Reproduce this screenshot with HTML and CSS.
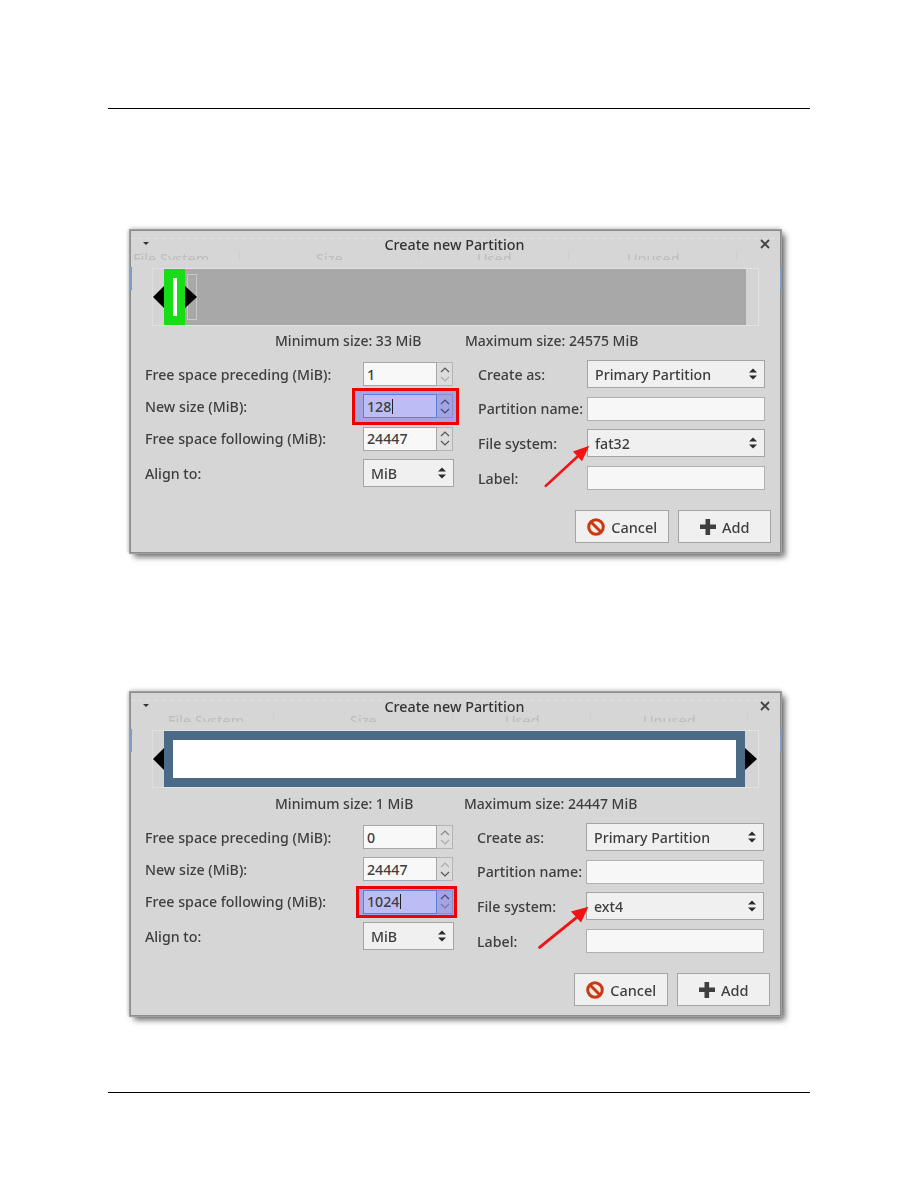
FILE: index.html
```html
<!DOCTYPE html>
<html lang="en">
<head>
<meta charset="utf-8">
<title>Create new Partition</title>
<link rel="stylesheet" href="styles.css">
</head>
<body>
<svg class="defs" width="0" height="0" aria-hidden="true">
  <symbol id="updown" viewBox="0 0 10 14"><path d="M5 0 10 5H0ZM5 14 0 9H10Z"/></symbol>
  <symbol id="chev-up" viewBox="0 0 10 6"><path d="M1 5 5 1 9 5" fill="none" stroke="currentColor" stroke-width="1.2"/></symbol>
  <symbol id="chev-down" viewBox="0 0 10 6"><path d="M1 1 5 5 9 1" fill="none" stroke="currentColor" stroke-width="1.2"/></symbol>
  <symbol id="cancel" viewBox="0 0 20 20"><circle cx="10" cy="10" r="7.3" fill="#f4ece8" stroke="#c93a12" stroke-width="3"/><path d="M5 5 15 15" stroke="#c93a12" stroke-width="3"/></symbol>
  <symbol id="plus" viewBox="0 0 18 18"><path d="M6.500 1h4.600v5.500h5.900v4.600h-5.900V17H6.500v-5.900H1V6.500h5.500Z" fill="#3f3f3f"/></symbol>
  <symbol id="close" viewBox="0 0 10 10"><path d="M1 1 9 9M9 1 1 9" stroke="#444" stroke-width="1.800"/></symbol>
</svg>
<main class="page">

  <section class="dialog dialog-a">
    <span class="sliver sliver-l"></span><span class="sliver sliver-r"></span>
    <header class="titlebar">
      <span class="menu-arrow"></span>
      <h2 class="title">Create new Partition</h2>
      <svg class="close"><use href="#close"/></svg>
    </header>
    <div class="ghost"><div class="ghost-text"><span>File System</span><span>Size</span><span>Used</span><span>Unused</span></div></div>
    <div class="graph">
      <div class="lead"><i class="tri tri-l"></i></div>
      <div class="part part-green"><b class="bar"></b></div>
      <div class="rest"><span class="outline"></span><i class="tri tri-r"></i></div>
      <div class="tail"></div>
    </div>
    <div class="sizes"><span class="min">Minimum size: 33 MiB</span><span class="max">Maximum size: 24575 MiB</span></div>
    <div class="form">
      <div class="col-left">
        <div class="row"><label>Free space preceding (MiB):</label><div class="spin"><div class="field">1</div><div class="steps"><svg class="on"><use href="#chev-up"/></svg><svg class="off"><use href="#chev-down"/></svg></div></div></div>
        <div class="row"><label>New size (MiB):</label><div class="spin hl hl-a"><div class="field">128<i class="caret"></i></div><div class="steps"><svg class="on"><use href="#chev-up"/></svg><svg class="on"><use href="#chev-down"/></svg></div></div></div>
        <div class="row"><label>Free space following (MiB):</label><div class="spin"><div class="field">24447</div><div class="steps"><svg class="on"><use href="#chev-up"/></svg><svg class="on"><use href="#chev-down"/></svg></div></div></div>
        <div class="row tall"><label>Align to:</label><div class="select short">MiB<svg class="updown"><use href="#updown"/></svg></div></div>
      </div>
      <div class="col-right">
        <div class="row tall"><label>Create as:</label><div class="select">Primary Partition<svg class="updown"><use href="#updown"/></svg></div></div>
        <div class="row"><label>Partition name:</label><div class="text"></div></div>
        <div class="row tall"><label>File system:</label><div class="select">fat32<svg class="updown"><use href="#updown"/></svg></div></div>
        <div class="row"><label>Label:</label><div class="text"></div></div>
      </div>
    </div>
    <div class="buttons">
      <div class="btn"><svg class="ico"><use href="#cancel"/></svg>Cancel</div>
      <div class="btn"><svg class="ico ico-plus"><use href="#plus"/></svg>Add</div>
    </div>
    <svg class="pointer pointer-a" viewBox="0 0 60 56"><path d="M3 51 44 13" stroke="#f01414" stroke-width="3.200" stroke-linecap="round"/><path d="M56 2 47 21 36 9Z" fill="#f01414"/></svg>
  </section>

  <section class="dialog dialog-b">
    <span class="sliver sliver-l"></span><span class="sliver sliver-r"></span>
    <header class="titlebar">
      <span class="menu-arrow"></span>
      <h2 class="title">Create new Partition</h2>
      <svg class="close"><use href="#close"/></svg>
    </header>
    <div class="ghost"><div class="ghost-text"><span>File System</span><span>Size</span><span>Used</span><span>Unused</span></div></div>
    <div class="graph">
      <div class="lead"><i class="tri tri-l"></i></div>
      <div class="part part-blue"><div class="part-inner"></div></div>
      <div class="tail"><i class="tri tri-r"></i></div>
    </div>
    <div class="sizes"><span class="min">Minimum size: 1 MiB</span><span class="max">Maximum size: 24447 MiB</span></div>
    <div class="form">
      <div class="col-left">
        <div class="row"><label>Free space preceding (MiB):</label><div class="spin"><div class="field">0</div><div class="steps"><svg class="mid"><use href="#chev-up"/></svg><svg class="off"><use href="#chev-down"/></svg></div></div></div>
        <div class="row"><label>New size (MiB):</label><div class="spin"><div class="field">24447</div><div class="steps"><svg class="off"><use href="#chev-up"/></svg><svg class="on"><use href="#chev-down"/></svg></div></div></div>
        <div class="row"><label>Free space following (MiB):</label><div class="spin hl hl-b"><div class="field">1024<i class="caret"></i></div><div class="steps"><svg class="on"><use href="#chev-up"/></svg><svg class="mid"><use href="#chev-down"/></svg></div></div></div>
        <div class="row tall"><label>Align to:</label><div class="select short">MiB<svg class="updown"><use href="#updown"/></svg></div></div>
      </div>
      <div class="col-right">
        <div class="row tall"><label>Create as:</label><div class="select">Primary Partition<svg class="updown"><use href="#updown"/></svg></div></div>
        <div class="row"><label>Partition name:</label><div class="text"></div></div>
        <div class="row tall"><label>File system:</label><div class="select">ext4<svg class="updown"><use href="#updown"/></svg></div></div>
        <div class="row"><label>Label:</label><div class="text"></div></div>
      </div>
    </div>
    <div class="buttons">
      <div class="btn"><svg class="ico"><use href="#cancel"/></svg>Cancel</div>
      <div class="btn"><svg class="ico ico-plus"><use href="#plus"/></svg>Add</div>
    </div>
    <svg class="pointer pointer-b" viewBox="0 0 60 50"><path d="M3 46 45 12" stroke="#f01414" stroke-width="3.200" stroke-linecap="round"/><path d="M56 2 48 19 37 7Z" fill="#f01414"/></svg>
  </section>

</main>
</body>
</html>
```

FILE: styles.css
```css
* { box-sizing: border-box; }
html, body { margin: 0; background: #fff; }
.defs { position: absolute; }
body { font-family: "Noto Sans", "Open Sans", sans-serif; font-size: 14.2px; color: #3e3e3e; }

.page {
  width: 702px;
  height: 985px;
  margin: 108px 0 0 108px;
  padding: 121px 0 0 22px;
  border-top: 1px solid #000;
  border-bottom: 1px solid #000;
}

.dialog {
  position: relative;
  width: 651px;
  height: 323px;
  border: 1px solid #8c8c8c;
  background: #d6d6d6;
  box-shadow: 0 0 0 1px #a0a0a0, 4px 4px 6px #6b6b6b, 0 -2px 4px #ccc, -2px 0 3px #ccc;
  filter: blur(0.5px);
}
.dialog-b { height: 324px; margin-top: 139px; }

.sliver { position: absolute; top: 36px; width: 2px; height: 23px; background: #7d9cc4; }
.sliver-l { left: -1px; }
.sliver-r { right: -2px; }

.titlebar {
  display: grid;
  grid-template-columns: 1fr auto 1fr;
  align-items: center;
  height: 26px;
  padding: 0 10px 0 12px;
  background: repeating-linear-gradient(90deg, #e3e2d2 0 4px, transparent 4px 8px) 0 7px / 100% 1px no-repeat;
}
.menu-arrow { width: 0; height: 0; margin-top: -2px; border: 3.500px solid transparent; border-top-color: #333; border-bottom: 0; }
.title { margin: 0; padding-right: 4px; font-size: 14.3px; font-weight: 500; color: #333; white-space: nowrap; }
.close { justify-self: end; width: 10px; height: 10px; }

.ghost { position: relative; height: 9px; overflow: hidden; margin-top: -6px; }
.ghost-text { display: grid; font-size: 14.500px; line-height: 14px; color: #bcbcbc; }
.ghost-text span { position: relative; }
.ghost-text span::after { content: ""; position: absolute; top: 0; left: 102px; height: 14px; border-left: 1px solid #cfcfcf; }
.dialog-a .ghost-text { grid-template-columns: 183px 161px 150px 1fr; padding-left: 2px; }
.dialog-a .ghost-text span:nth-child(1)::after { left: 106px; }
.dialog-a .ghost-text span:nth-child(3)::after { left: 91px; }
.dialog-a .ghost-text span:nth-child(4)::after { left: 109px; }
.dialog-b .ghost-text { grid-template-columns: 182px 155px 138px 1fr; padding-left: 37px; }
.dialog-b .ghost-text span:nth-child(1)::after { left: 105px; }
.dialog-b .ghost-text span:nth-child(3)::after { left: 85px; }
.dialog-b .ghost-text span:nth-child(4)::after { left: 104px; }

.graph {
  display: flex;
  width: 607px;
  height: 58px;
  margin: 8px 0 0 21px;
  border: 1px solid #e2e2e2;
  border-left-color: #dedede;
  background: #d4d4d4;
}
.lead { position: relative; width: 11px; flex: none; }
.part { flex: none; display: flex; align-items: center; justify-content: center; }
.part-green { width: 21px; background: #17dc17; }
.bar { width: 4px; height: 38px; background: #fff; }
.rest { position: relative; width: 561px; flex: none; background: #a8a8a8; }
.tail { position: relative; flex: 1; }
.part-blue { width: 581px; background: #4a6a88; }
.part-inner { width: 563px; height: 38px; background: #fff; }
.tri { position: absolute; top: 17px; width: 0; height: 0; border: 11.500px solid transparent; }
.tri-l { right: 0; border-left: 0; border-right: 11px solid #000; }
.tri-r { left: 0; border-right: 0; border-left: 12px solid #000; }
.outline { position: absolute; left: 2px; top: 5px; width: 10px; height: 46px; border: 1px solid #c8c8c8; }

.sizes { position: relative; height: 18px; margin-top: 6px; font-size: 14px; line-height: 18px; font-weight: 500; white-space: nowrap; }
.dialog-b .sizes { margin-top: 7px; }
.min { position: absolute; left: 144px; }
.max { position: absolute; left: 334px; }
.dialog-b .max { left: 333px; }

.form { display: flex; margin: 10px 0 0 14px; height: 129px; }
.col-left { width: 333px; padding-top: 2px; display: flex; flex-direction: column; gap: 8.400px; }
.col-right { width: 287px; display: flex; flex-direction: column; gap: 8.700px; }
.dialog-b .col-right { margin-left: -1px; }

.row { display: flex; align-items: center; height: 24px; white-space: nowrap; }
.row.tall { height: 28px; }
.row label { font-weight: 500; }
.col-left .row label { width: 218px; flex: none; }
.col-right .row label { width: 109px; flex: none; }

.spin { position: relative; display: flex; width: 90px; height: 24px; }
.field {
  position: relative;
  display: flex;
  align-items: center;
  width: 75px;
  padding-left: 3px;
  background: #f8f8f8;
  border: 1px solid #a6a6a6;
  font-weight: 500;
}
.steps {
  position: relative;
  display: flex;
  flex-direction: column;
  align-items: center;
  justify-content: space-around;
  width: 16px;
  padding: 2px 0;
  background: #dcdcdc;
  border: 1px solid #b4b4b4;
  border-left: 0;
}
.steps svg { width: 10px; height: 6px; }
.steps .on { color: #555; }
.steps .mid { color: #888; }
.steps .off { color: #adadad; }

.hl::before { content: ""; position: absolute; border: 3.500px solid #f00000; background: #a4a4e2; }
.hl-a::before { inset: -6px -6px -7px -11px; }
.hl-b::before { inset: -4px -4px -4px -7px; border-width: 3px; }
.hl .field { background: #bdbdf5; border-color: #5b7fdc; }
.hl .steps { background: #a4a4e2; border-color: #8d8dc6; }
.hl .steps .on { color: #3f4a80; }
.hl .steps .mid { color: #7378b6; }
.caret { width: 1px; height: 15px; margin-left: 1px; background: #222; }

.select {
  display: flex;
  align-items: center;
  justify-content: space-between;
  width: 178px;
  height: 28px;
  padding: 0 7px;
  background: #f0f0f0;
  border: 1px solid #a4a4a4;
  font-weight: 500;
}
.select.short { width: 91px; }
.updown { width: 8px; height: 12px; fill: #2b2b2b; }
.text { width: 178px; height: 24px; background: #f7f7f7; border: 1px solid #b0b0b0; }

.buttons { display: flex; justify-content: flex-end; gap: 9px; margin: 21px 9px 0 0; }
.dialog-b .buttons { margin-right: 10px; }
.btn {
  display: flex;
  align-items: center;
  justify-content: center;
  gap: 5px;
  width: 93.500px;
  height: 33px;
  background: #f0f0f0;
  border: 1px solid #a4a4a4;
  font-weight: 500;
  font-size: 14.500px;
}
.ico { width: 20px; height: 20px; }
.ico-plus { width: 18px; height: 18px; }

.pointer { position: absolute; pointer-events: none; }
.pointer-a { left: 412px; top: 213px; width: 50px; height: 46px; }
.pointer-b { left: 405px; top: 212px; width: 57px; height: 46px; }
```
